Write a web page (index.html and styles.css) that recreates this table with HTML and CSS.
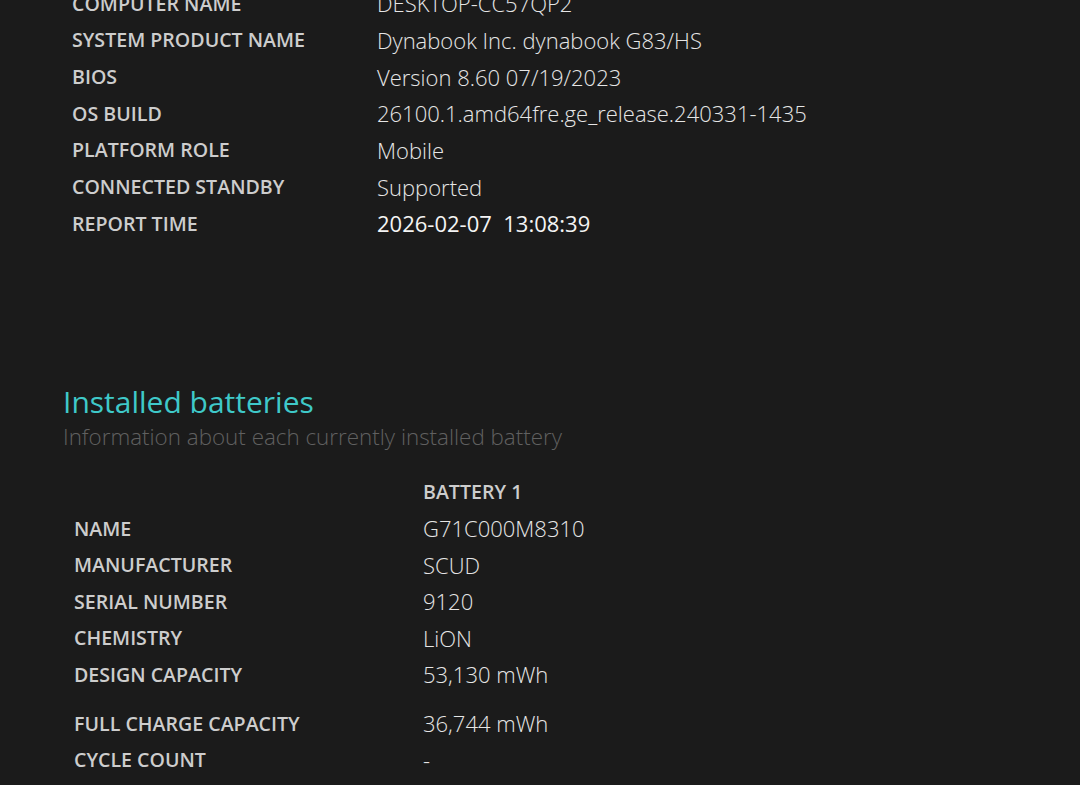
FILE: index.html
```html
<!DOCTYPE html>
<html>
<head>
<meta charset="utf-8">
<link rel="stylesheet" href="styles.css">
</head>
<body>
<div class="page">
  <div class="info-table">
    <div class="row"><div class="lbl">COMPUTER NAME</div><div class="val">DESKTOP-CC57QP2</div></div>
    <div class="row"><div class="lbl">SYSTEM PRODUCT NAME</div><div class="val">Dynabook Inc. dynabook G83/HS</div></div>
    <div class="row"><div class="lbl">BIOS</div><div class="val">Version 8.60 07/19/2023</div></div>
    <div class="row"><div class="lbl">OS BUILD</div><div class="val">26100.1.amd64fre.ge_release.240331-1435</div></div>
    <div class="row"><div class="lbl">PLATFORM ROLE</div><div class="val">Mobile</div></div>
    <div class="row"><div class="lbl">CONNECTED STANDBY</div><div class="val">Supported</div></div>
    <div class="row"><div class="lbl">REPORT TIME</div><div class="val strong">2026-02-07&nbsp; 13:08:39</div></div>
  </div>

  <div class="section-head">
    <h2 class="title">Installed batteries</h2>
    <div class="subtitle">Information about each currently installed battery</div>
  </div>

  <div class="battery-table">
    <div class="row"><div class="lbl"></div><div class="lbl">BATTERY 1</div></div>
    <div class="row"><div class="lbl">NAME</div><div class="val">G71C000M8310</div></div>
    <div class="row"><div class="lbl">MANUFACTURER</div><div class="val">SCUD</div></div>
    <div class="row"><div class="lbl">SERIAL NUMBER</div><div class="val">9120</div></div>
    <div class="row"><div class="lbl">CHEMISTRY</div><div class="val">LiON</div></div>
    <div class="row"><div class="lbl">DESIGN CAPACITY</div><div class="val">53,130 mWh</div></div>
    <div class="row spaced"><div class="lbl">FULL CHARGE CAPACITY</div><div class="val">36,744 mWh</div></div>
    <div class="row"><div class="lbl">CYCLE COUNT</div><div class="val">-</div></div>
  </div>
</div>
</body>
</html>
```

FILE: styles.css
```css
html, body {
  margin: 0;
  padding: 0;
  background: #1b1b1b;
  height: 100%;
  overflow: hidden;
}

.page {
  font-family: "Open Sans", "Noto Sans", sans-serif;
  color: #e4e4e4;
}

.info-table {
  margin-top: -15px;
  padding-left: 72px;
}

.info-table .row {
  display: grid;
  grid-template-columns: 305px auto;
  height: 36.67px;
  align-items: center;
}

.battery-table {
  padding-left: 74px;
  margin-top: 20px;
}

.battery-table .row {
  display: grid;
  grid-template-columns: 349px auto;
  height: 36.5px;
  align-items: center;
}

.battery-table .row.spaced {
  margin-top: 12.5px;
}

.lbl {
  font-size: 19.6px;
  font-weight: 600;
  color: #cdcdcd;
  white-space: nowrap;
}

.val {
  font-size: 22px;
  font-weight: 300;
  color: #e6e6e6;
  white-space: nowrap;
}

.val.strong {
  font-weight: 400;
  color: #f4f4f4;
}

.section-head {
  padding-left: 63px;
  margin-top: 142px;
}

.title {
  margin: 0;
  font-size: 30px;
  font-weight: 500;
  line-height: 36px;
  color: #3fc9c9;
}

.subtitle {
  font-size: 22.4px;
  font-weight: 300;
  line-height: 34px;
  color: #606060;
}
```
